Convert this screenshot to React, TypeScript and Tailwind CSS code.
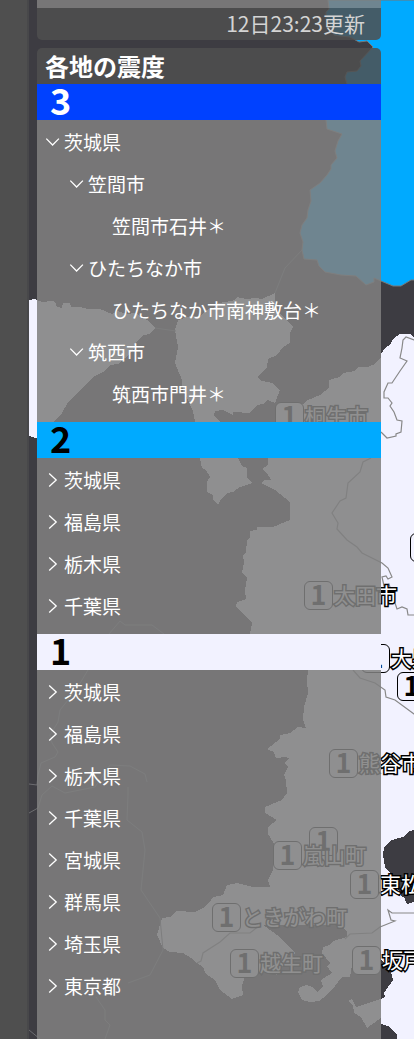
import { useState } from "react";

type Node = { name: string; open?: boolean; children?: Node[] };
type Group = { level: string; band: string; nodes: Node[] };
type Pin = { x: number; y: number; label: string };

const groups: Group[] = [
  {
    level: "3",
    band: "bg-[#0041ff] text-white",
    nodes: [
      {
        name: "茨城県",
        open: true,
        children: [
          { name: "笠間市", open: true, children: [{ name: "笠間市石井＊" }] },
          { name: "ひたちなか市", open: true, children: [{ name: "ひたちなか市南神敷台＊" }] },
          { name: "筑西市", open: true, children: [{ name: "筑西市門井＊" }] },
        ],
      },
    ],
  },
  {
    level: "2",
    band: "bg-[#00aaff] text-black",
    nodes: ["茨城県", "福島県", "栃木県", "千葉県"].map((name) => ({ name, children: [] })),
  },
  {
    level: "1",
    band: "bg-[#f2f2ff] text-black",
    nodes: ["茨城県", "福島県", "栃木県", "千葉県", "宮城県", "群馬県", "埼玉県", "東京都"].map((name) => ({
      name,
      children: [],
    })),
  },
];

const pins: Pin[] = [
  { x: 246, y: 402, label: "桐生市" },
  { x: 381, y: 533, label: "" },
  { x: 275, y: 581, label: "太田市" },
  { x: 332, y: 644, label: "大泉町" },
  { x: 368, y: 672, label: "" },
  { x: 300, y: 749, label: "熊谷市" },
  { x: 280, y: 827, label: "" },
  { x: 244, y: 841, label: "嵐山町" },
  { x: 321, y: 870, label: "東松山市" },
  { x: 183, y: 903, label: "ときがわ町" },
  { x: 201, y: 949, label: "越生町" },
  { x: 323, y: 946, label: "坂戸市" },
];

const blueArea =
  "M328 0 329 9 326 12 326 20 330 25 334 35 340 36 350 37 359 42 367 41 373 47 360 61 361 66 357 71 347 72 345 77 347 84 335 100 326 120 327 129 342 134 338 141 335 151 337 158 331 165 331 169 327 175 320 183 310 190 311 201 308 210 307 218 302 225 300 233 303 242 302 250 304 259 317 260 319 266 325 272 341 275 356 276 366 285 374 282 374 278 381 281 393 286 401 286 411 280 1600 280 1600 0Z";

const lightAreas = [
  "M29 300 35 299 42 302 52 301 55 302 57 307 62 308 63 303 70 303 71 307 80 307 88 309 100 309 112 314 118 311 126 314 135 313 147 320 155 328 150 334 143 335 135 343 133 351 125 358 118 364 110 365 105 371 93 377 80 390 68 402 62 413 53 422 37 438 35 438 29 436Z",
  "M178 320 190 316 200 316 206 310 213 308 218 303 226 302 235 300 237 297 246 299 255 298 262 299 275 293 275 310 284 317 293 327 290 333 290 343 283 347 277 355 268 359 267 367 257 377 262 381 272 383 280 390 275 403 268 400 263 404 257 405 250 413 233 412 233 415 223 410 215 411 214 416 220 422 232 440 238 458 242 466 247 468 247 478 252 483 240 487 233 492 227 493 221 499 218 505 213 500 213 495 207 492 207 482 210 477 206 470 202 468 200 458 195 422 193 411 188 400 183 391 182 380 175 363 178 347 175 330Z",
  "M381 354 385 348 390 345 393 339 400 334 410 334 414 338 430 342 1600 342 1600 1800 397 1800 397 1035 390 1027 381 1024 381 1018 367 1028 361 1017 354 1013 353 1005 348 1001 352 999 356 1007 381 999 385 997 384 993 393 980 390 967 381 960 360 966 352 965 350 977 342 977 335 986 327 995 319 1001 310 1002 302 1000 298 992 300 987 307 985 312 987 317 992 323 987 321 980 332 973 327 966 330 963 322 953 323 947 330 945 333 941 347 937 347 932 340 925 263 925 280 937 295 953 290 963 280 967 277 975 272 972 260 972 252 976 245 977 242 986 243 995 232 999 228 996 220 990 215 980 206 974 203 967 197 963 191 958 183 953 170 952 163 948 157 935 162 918 170 917 176 911 195 912 203 908 210 902 213 897 223 895 227 885 237 883 253 887 270 887 268 880 273 870 275 845 268 834 268 827 277 820 265 813 265 807 282 800 287 793 286 780 284 775 288 767 285 763 289 758 285 757 276 758 274 752 267 749 280 739 280 735 290 733 298 727 306 728 303 720 304 707 308 693 307 680 308 670 250 634 252 623 247 617 236 607 237 602 246 599 245 590 247 578 242 572 244 563 243 555 246 553 247 540 250 538 250 531 257 530 257 527 273 527 290 520 290 502 275 490 261 483 264 480 271 480 267 473 262 469 268 465 268 458 270 440 275 422 297 409 308 400 320 395 329 388 329 380 340 377 343 373 355 371 358 367 368 367 375 364 381 357Z",
];

const darkArea =
  "M440 826 414 830 410 831 403 837 392 840 384 847 383 855 385 867 390 873 400 893 402 897 404 897 407 904 414 902 440 899Z";

const borders = [
  "M430 346 414 340 406 337 403 340 402 348 400 358 407 361 400 371 392 383 388 383 384 392 384 398 388 398 392 403 390 406 394 412 397 420 402 421 401 432 396 434 396 436 387 438 381 432",
  "M371 458 363 462 360 472 348 483 346 498 340 501 332 513 338 523 337 529 347 540 357 547 362 553 382 563 388 568 392 577 388 579 386 576 382 577 384 586 389 584 395 603 397 609 402 607 407 609 408 615 430 615",
  "M353 670 360 678 375 683 385 690 386 697 395 700 430 726",
  "M430 912 414 913 392 913 388 910 391 920 395 921 380 927 372 933 350 934 345 939",
  "M197 963 201 961 203 953 220 942 230 933 250 933 260 925",
];

const darkBorders = [
  "M109 634 120 621 125 625 152 625 164 634 M88 670 76 690 60 710 58 722 50 735 52 743 58 752 55 757 41 763 38 775 37 785 29 784",
  "M29 813 38 808 42 795 52 786 65 793 95 787 110 765 130 766 145 774 147 782 M128 787 128 795 127 820 142 832 145 850 141 890 160 918 163 950 150 975 128 983",
  "M29 1030 40 1039 M96 997 105 1010 105 1020 110 1025 105 1039 M302 250 285 268 275 293 M155 328 176 331",
];

function Chevron({ open }: { open: boolean }) {
  return (
    <svg viewBox="0 0 16 16" className="size-4 shrink-0" fill="none" stroke="currentColor" strokeWidth="1.3" aria-hidden="true">
      <path d={open ? "M1.3 4.6 7.6 11 13.9 4.6" : "M4.2 1.6 11.2 8 4.2 14.4"} />
    </svg>
  );
}

function TreeItem({ node, depth }: { node: Node; depth: number }) {
  const [open, setOpen] = useState(Boolean(node.open));
  const indent = ["pl-2", "pl-8", "pl-14"][depth];
  const row = `flex h-[42px] w-full items-center gap-[3px] text-left ${indent}`;
  if (!node.children) {
    return (
      <li className={row}>
        <span className="w-4 shrink-0" />
        {node.name}
      </li>
    );
  }
  return (
    <li>
      <button type="button" className={row} aria-expanded={open} onClick={() => setOpen(!open)}>
        <Chevron open={open} />
        {node.name}
      </button>
      {open && node.children.length > 0 && (
        <ul>
          {node.children.map((child) => (
            <TreeItem key={child.name} node={child} depth={depth + 1} />
          ))}
        </ul>
      )}
    </li>
  );
}

function MapLayer() {
  return (
    <div className="absolute inset-0 overflow-hidden bg-[#3d3c42]">
      <svg className="absolute inset-0 h-full w-full" aria-hidden="true">
        <g transform="translate(-29 0)">
          <path d={blueArea} fill="#00aaff" stroke="#777" strokeWidth="1" />
          {lightAreas.map((d) => (
            <path key={d} d={d} fill="#f2f2ff" shapeRendering="crispEdges" />
          ))}
          <path d={darkArea} fill="#3d3c42" shapeRendering="crispEdges" />
          {borders.map((d) => (
            <path key={d} d={d} fill="none" stroke="#888" strokeWidth="1.2" />
          ))}
          {darkBorders.map((d) => (
            <path key={d} d={d} fill="none" stroke="#6c6c70" strokeWidth="1" />
          ))}
        </g>
      </svg>
      {pins.map((pin) => (
        <div key={`${pin.x}-${pin.y}`} className="absolute flex items-center" style={{ left: pin.x, top: pin.y }}>
          <span className="flex size-[29px] shrink-0 items-center justify-center rounded-md border border-black bg-[#f2f2ff] text-[27px] leading-6 font-bold text-black">
            <span className="-mt-1">1</span>
          </span>
          <span className="-mt-1 pl-px text-[21px] leading-6 whitespace-nowrap text-white [-webkit-text-stroke:3px_#000] [paint-order:stroke_fill]">
            {pin.label}
          </span>
        </div>
      ))}
    </div>
  );
}

export default function App() {
  return (
    <div className="flex min-h-screen bg-[#4f4f4f] font-['Noto_Sans_CJK_JP',sans-serif]">
      <aside className="w-[29px] shrink-0 border-r-2 border-[#48484a] bg-[#4f4f4f]" />
      <main className="relative flex min-w-0 flex-1 overflow-hidden pr-[33px] pl-2">
        <MapLayer />
        <div className="relative flex min-w-0 flex-1 flex-col gap-2 text-white">
          <section className="overflow-hidden rounded-b-[5px]">
            <div className="h-2 bg-[#7f7f7f]/87" />
            <p className="bg-[#4f4f4f]/86 pr-4 pb-0.5 text-right text-[21px] leading-[30px] text-[#d4d4d4]">12日23:23更新</p>
          </section>
          <section className="flex flex-1 flex-col overflow-hidden rounded-t-[5px]">
            <h2 className="bg-[#4f4f4f]/86 px-2 text-2xl leading-9 font-bold">各地の震度</h2>
            {groups.map((group) => (
              <div key={group.level} className="flex flex-col last:flex-1">
                <h3 className={`flex h-9 items-center pl-[13px] text-4xl leading-8 font-bold ${group.band}`}>
                  <span className="-mt-1.5">{group.level}</span>
                </h3>
                <ul className="flex-1 bg-[#7f7f7f]/87 pt-px pb-[7px] text-[19px] leading-7">
                  {group.nodes.map((node) => (
                    <TreeItem key={node.name} node={node} depth={0} />
                  ))}
                </ul>
              </div>
            ))}
          </section>
        </div>
      </main>
    </div>
  );
}
